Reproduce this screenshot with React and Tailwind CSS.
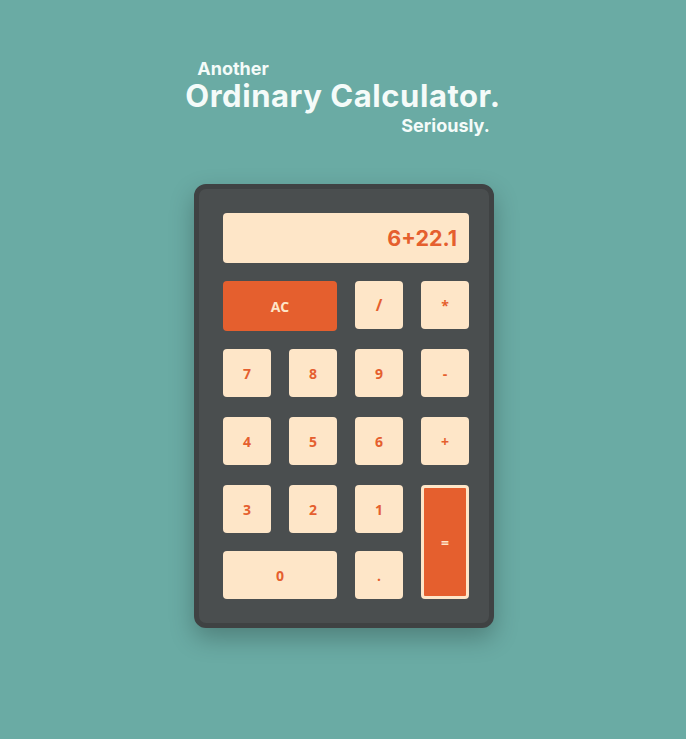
import React from 'react';

const key = "flex items-center justify-center rounded-[4px] bg-[#fee6c8] text-[14px] font-bold text-[#e55f2e]";

export default function App() {
  const rows = [['7', '8', '9', '-'], ['4', '5', '6', '+']];
  return (
    <div className="min-h-[739px] w-full bg-[#6aaba4] pt-[58px] font-['Inter',sans-serif]">
      <div className="flex justify-center">
        <div className="flex flex-col text-[#f4fbf9]">
          <span className="pl-[12px] text-[18px] font-bold leading-[22px]">Another</span>
          <span className="text-[31px] font-bold leading-[32px] tracking-[0.55px]">Ordinary Calculator.</span>
          <span className="pr-[11px] text-right text-[18px] font-bold leading-[28px]">Seriously.</span>
        </div>
      </div>
      <div className="mt-[44px] flex justify-center pl-[2px]">
        <div className="w-[300px] rounded-[12px] border-[5px] border-[#3f4243] bg-[#4a4e4f] pb-[24px] pl-[24px] pr-[20px] pt-[24px] shadow-[0_10px_25px_rgba(0,0,0,0.25)] font-['Open_Sans',sans-serif]">
          <div className="flex h-[50px] items-center justify-end rounded-[4px] bg-[#fee6c8] pr-[12px] font-['Inter',sans-serif] text-[21.5px] font-bold text-[#e55f2e]">6+22.1</div>
          <div className="mt-[18px] grid grid-cols-[48px_48px_48px_48px] gap-x-[18px]">
            <button className="col-span-2 flex h-[50px] items-center justify-center rounded-[4px] bg-[#e55f2e] text-[14px] font-bold text-[#fee6c8]">AC</button>
            <button className={`${key} h-[48px] text-[16px]`}>/</button>
            <button className={`${key} h-[48px]`}>*</button>
          </div>
          {rows.map((r, i) => (
            <div key={r[0]} className={`${i === 0 ? 'mt-[18px]' : 'mt-[20px]'} grid grid-cols-[48px_48px_48px_48px] gap-x-[18px]`}>
              {r.map((k) => (
                <button key={k} className={`${key} h-[48px]`}>{k}</button>
              ))}
            </div>
          ))}
          <div className="mt-[20px] grid grid-cols-[48px_48px_48px_48px] grid-rows-[48px_48px] gap-x-[18px] gap-y-[18px]">
            <button className={key}>3</button>
            <button className={key}>2</button>
            <button className={key}>1</button>
            <button className="row-span-2 flex items-center justify-center rounded-[4px] border-[3px] border-[#fee6c8] bg-[#e55f2e] text-[14px] font-bold text-[#fee6c8]">=</button>
            <button className={`${key} col-span-2`}>0</button>
            <button className={key}>.</button>
          </div>
        </div>
      </div>
    </div>
  );
}
